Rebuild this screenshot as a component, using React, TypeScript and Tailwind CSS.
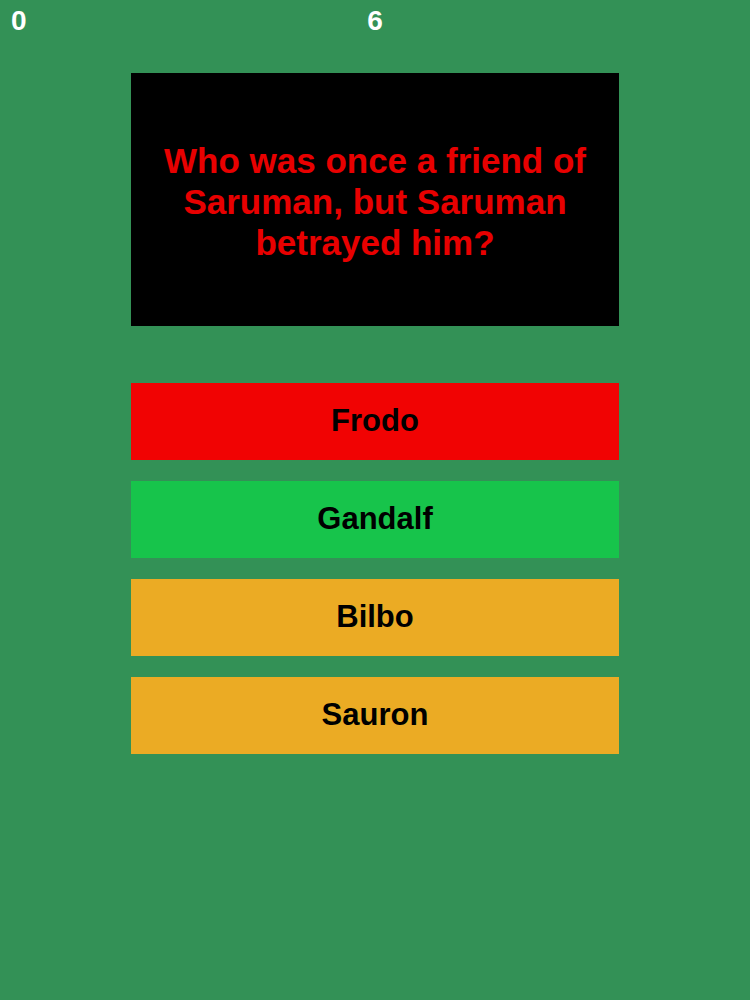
export default function App() {
  const answers = [
    { label: "Frodo", color: "bg-[#f10303]" },
    { label: "Gandalf", color: "bg-[#17c44b]" },
    { label: "Bilbo", color: "bg-[#ebab24]" },
    { label: "Sauron", color: "bg-[#ebab24]" },
  ];

  return (
    <div
      className="w-[750px] h-[1000px] bg-[#339156] flex flex-col"
      style={{ fontFamily: '"Liberation Sans", Arial, sans-serif' }}
    >
      {/* Score bar */}
      <div className="grid grid-cols-3 h-10 px-[11px] pt-[3px] text-white font-bold text-[28px] leading-[36px]">
        <span>0</span>
        <span className="text-center">6</span>
        <span />
      </div>

      {/* Question */}
      <div className="mt-[33px] mx-auto w-[488px] h-[253px] bg-black flex items-center justify-center px-[26px] pt-[4px]">
        <p className="text-center text-[#e80000] font-bold text-[35px] leading-[41px]">
          Who was once a friend of Saruman, but Saruman betrayed him?
        </p>
      </div>

      {/* Answers */}
      <div className="mt-[57px] mx-auto w-[488px] flex flex-col gap-[21px]">
        {answers.map((a) => (
          <button
            key={a.label}
            className={`h-[77px] w-full ${a.color} flex items-center justify-center text-black font-bold text-[31px]`}
          >
            {a.label}
          </button>
        ))}
      </div>
    </div>
  );
}
